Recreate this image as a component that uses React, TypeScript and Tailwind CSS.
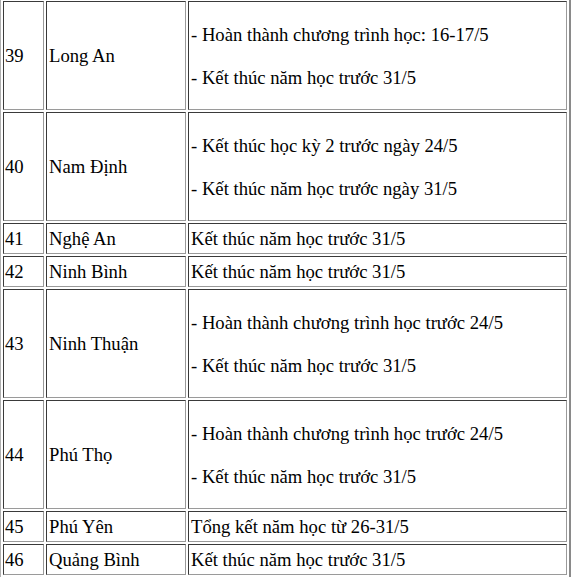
import React from "react";

type Row = { n: string; name: string; lines: string[] };

const rows: Row[] = [
  { n: "39", name: "Long An", lines: ["- Hoàn thành chương trình học: 16-17/5", "- Kết thúc năm học trước 31/5"] },
  { n: "40", name: "Nam Định", lines: ["- Kết thúc học kỳ 2 trước ngày 24/5", "- Kết thúc năm học trước ngày 31/5"] },
  { n: "41", name: "Nghệ An", lines: ["Kết thúc năm học trước 31/5"] },
  { n: "42", name: "Ninh Bình", lines: ["Kết thúc năm học trước 31/5"] },
  { n: "43", name: "Ninh Thuận", lines: ["- Hoàn thành chương trình học trước 24/5", "- Kết thúc năm học trước 31/5"] },
  { n: "44", name: "Phú Thọ", lines: ["- Hoàn thành chương trình học trước 24/5", "- Kết thúc năm học trước 31/5"] },
  { n: "45", name: "Phú Yên", lines: ["Tổng kết năm học từ 26-31/5"] },
  { n: "46", name: "Quảng Bình", lines: ["Kết thúc năm học trước 31/5"] },
];

const font = "font-['Liberation_Serif','Times_New_Roman',serif] text-[18.67px] text-black";

const cell =
  "p-0 align-middle border border-t-[#3a3a3a] border-l-[#3a3a3a] border-b-[#9a9a9a] border-r-[#9a9a9a] " + font;

export default function App() {
  return (
    <div className={`w-[571px] h-[578px] bg-white overflow-hidden ${font}`}>
      <table className={`table-fixed border-separate border-spacing-[2px] w-[571px] -mt-[1px] border-l border-l-[#b0b0b0] border-r-2 border-r-[#8a8a8a] ${font}`}>
        <colgroup>
          <col className="w-[41px]" />
          <col className="w-[140px]" />
          <col />
        </colgroup>
        <tbody>
          {rows.map((r) => {
            const tall = r.lines.length > 1;
            const h = tall ? "h-[107px]" : "h-[29px]";
            return (
              <tr key={r.n}>
                <td className={cell}>
                  <div className={`${h} flex items-center pl-[1px] leading-[29px]`}>{r.n}</div>
                </td>
                <td className={cell}>
                  <div className={`${h} flex items-center pl-[2px] leading-[29px]`}>{r.name}</div>
                </td>
                <td className={cell}>
                  <div className={`${h} flex flex-col justify-center gap-[14px] pl-[2px] leading-[29px] whitespace-nowrap`}>
                    {r.lines.map((l) => (
                      <div key={l}>{l}</div>
                    ))}
                  </div>
                </td>
              </tr>
            );
          })}
        </tbody>
      </table>
    </div>
  );
}
